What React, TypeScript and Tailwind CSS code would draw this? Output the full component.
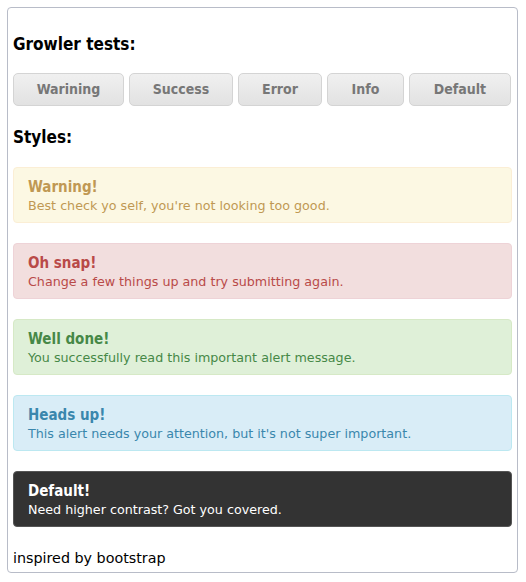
import React from 'react';

const buttons = [
  { label: 'Warining', w: 'w-[111px]' },
  { label: 'Success', w: 'w-[104px]' },
  { label: 'Error', w: 'w-[84px]' },
  { label: 'Info', w: 'w-[77px]' },
  { label: 'Default', w: 'w-[102px]' },
];

const alerts = [
  {
    title: 'Warning!',
    text: "Best check yo self, you're not looking too good.",
    cls: 'bg-[#fcf8e3] border-[#fbeed5] text-[#c09853]',
  },
  {
    title: 'Oh snap!',
    text: 'Change a few things up and try submitting again.',
    cls: 'bg-[#f2dede] border-[#eed3d7] text-[#b94a48]',
  },
  {
    title: 'Well done!',
    text: 'You successfully read this important alert message.',
    cls: 'bg-[#dff0d8] border-[#d6e9c6] text-[#468847]',
  },
  {
    title: 'Heads up!',
    text: "This alert needs your attention, but it's not super important.",
    cls: 'bg-[#d9edf7] border-[#bce8f1] text-[#3a87ad]',
  },
  {
    title: 'Default!',
    text: 'Need higher contrast? Got you covered.',
    cls: 'bg-[#333333] border-[#555555] text-white',
  },
];

const bold = "font-['DejaVu_Sans_Condensed',sans-serif] font-bold";
const plain = "font-['DejaVu_Sans',sans-serif]";

export default function App() {
  return (
    <div className="p-[7px]">
      <div className="w-[511px] border border-[#b8bcc8] rounded-[4px] px-[5px] pt-[24px] pb-[4px]">
        <h2 className={`${bold} text-[17px] text-black leading-[24px]`}>Growler tests:</h2>
        <div className="flex gap-[5px] mt-[17px]">
          {buttons.map((b) => (
            <button
              key={b.label}
              className={`${b.w} ${bold} h-[33px] rounded-[5px] border border-[#d4d4d4] bg-gradient-to-b from-[#f0f0f0] to-[#e2e2e2] text-[14px] text-[#777777]`}
            >
              {b.label}
            </button>
          ))}
        </div>
        <h2 className={`${bold} text-[17px] text-black leading-[24px] mt-[19px]`}>Styles:</h2>
        <div className="flex flex-col gap-[20px] mt-[18px]">
          {alerts.map((a) => (
            <div key={a.title} className={`border rounded-[4px] px-[14px] pt-[9px] pb-[8px] ${a.cls}`}>
              <div className={`${bold} text-[15px] leading-[20px]`}>{a.title}</div>
              <div className={`${plain} text-[12.7px] leading-[17px]`}>{a.text}</div>
            </div>
          ))}
        </div>
        <p className={`${plain} text-[14.3px] text-black mt-[21px] leading-[20px]`}>inspired by bootstrap</p>
      </div>
    </div>
  );
}
